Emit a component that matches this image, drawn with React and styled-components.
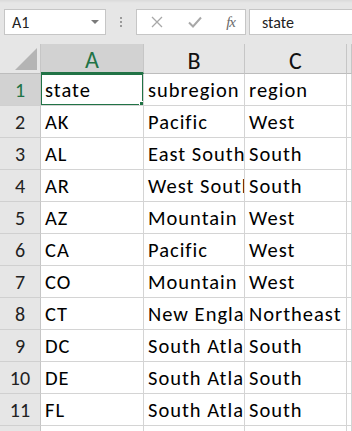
import React from "react"
import styled, { createGlobalStyle } from "styled-components"

const GlobalStyle = createGlobalStyle`
  html, body {
    margin: 0;
    padding: 0;
    background: #ffffff;
    overflow: hidden;
  }
  * {
    box-sizing: border-box;
  }
`

const FONT = `Carlito, Lato, "Open Sans", "Liberation Sans", sans-serif`
const GREEN = "#217346"

const Page = styled.div`
  width: 352px;
  height: 431px;
  overflow: hidden;
  font-family: ${FONT};
  background: #ffffff;
`

// formula bar strip
const Toolbar = styled.div`
  height: 44px;
  display: flex;
  align-items: flex-start;
  padding: 9px 0 0 4px;
  background: linear-gradient(#dadada 0px, #e6e6e6 3px, #e6e6e6 100%);
`
const NameBox = styled.div`
  width: 102px;
  height: 26px;
  background: #ffffff;
  border: 1px solid #c6c6c6;
  display: flex;
  align-items: center;
  justify-content: space-between;
  padding: 0 6px 0 7px;
  font-size: 16px;
  color: #222;
`
const Caret = styled.span`
  width: 0;
  height: 0;
  border-left: 4px solid transparent;
  border-right: 4px solid transparent;
  border-top: 4px solid #7a7a7a;
`
const Grip = styled.div`
  width: 30px;
  height: 26px;
  display: flex;
  flex-direction: column;
  align-items: center;
  justify-content: center;
  gap: 2px;
`
const Dot = styled.span`
  width: 2px;
  height: 2px;
  background: #9a9a9a;
`
const ButtonBox = styled.div`
  width: 110px;
  height: 26px;
  background: #ffffff;
  border: 1px solid #c6c6c6;
  display: flex;
  align-items: center;
  padding: 0 10px 0 14px;
  justify-content: space-between;
`
const Icon = styled.svg`
  display: block;
`
const Fx = styled.span`
  font-family: "Liberation Serif", serif;
  font-style: italic;
  font-size: 15px;
  color: #6a6a6a;
  letter-spacing: -1px;
`
const FormulaInput = styled.div`
  flex: 1;
  height: 26px;
  margin-left: 3px;
  background: #ffffff;
  border: 1px solid #c6c6c6;
  border-right: none;
  display: flex;
  align-items: center;
  padding-left: 12px;
  font-size: 16px;
  color: #222;
`

// sheet grid
const Sheet = styled.div`
  display: grid;
  grid-template-columns: 41px 103px 101px 102px 1fr;
  grid-auto-rows: 32px;
  grid-template-rows: 30px;
`
const Corner = styled.div`
  background: #e6e6e6;
  border-right: 1px solid #c6c6c6;
  border-bottom: 1px solid #bdbdbd;
  display: flex;
  align-items: flex-end;
  justify-content: flex-end;
  padding: 0 3px 3px 0;
`
const ColHead = styled.div`
  background: ${(p) => (p.active ? "#d2d2d2" : "#e6e6e6")};
  color: ${(p) => (p.active ? GREEN : "#111")};
  border-right: 1px solid #c6c6c6;
  border-bottom: ${(p) => (p.active ? `2px solid ${GREEN}` : "1px solid #bdbdbd")};
  display: flex;
  align-items: center;
  justify-content: center;
  font-size: 24px;
  padding-top: 3px;
`
const RowHead = styled.div`
  background: ${(p) => (p.active ? "#d2d2d2" : "#e6e6e6")};
  color: ${(p) => (p.active ? GREEN : "#222")};
  border-right: 1px solid #c6c6c6;
  border-bottom: 1px solid #d0d0d0;
  display: flex;
  align-items: center;
  justify-content: center;
  font-size: 20px;
  padding-top: 1px;
`
const Cell = styled.div`
  position: relative;
  border-right: 1px solid #d4d4d4;
  border-bottom: 1px solid #d4d4d4;
  display: flex;
  align-items: center;
  padding: 1px 0 0 4px;
  font-size: 20.5px;
  letter-spacing: 1px;
  color: #000;
  white-space: nowrap;
  overflow: ${(p) => (p.clip ? "hidden" : "visible")};
  ${(p) =>
    p.selected &&
    `
    &::after {
      content: "";
      position: absolute;
      left: -1px;
      top: -1px;
      right: -1px;
      bottom: -1px;
      border: 2px solid ${GREEN};
      pointer-events: none;
    }
    &::before {
      content: "";
      position: absolute;
      right: -4px;
      bottom: -4px;
      width: 6px;
      height: 6px;
      background: ${GREEN};
      border: 1px solid #ffffff;
      z-index: 2;
    }
  `}
`

const rows = [
  ["state", "subregion", "region"],
  ["AK", "Pacific", "West"],
  ["AL", "East South Central", "South"],
  ["AR", "West South Central", "South"],
  ["AZ", "Mountain", "West"],
  ["CA", "Pacific", "West"],
  ["CO", "Mountain", "West"],
  ["CT", "New England", "Northeast"],
  ["DC", "South Atlantic", "South"],
  ["DE", "South Atlantic", "South"],
  ["FL", "South Atlantic", "South"],
  ["GA", "South Atlantic", "South"],
]

function App() {
  return (
    <Page>
      <GlobalStyle />
      <Toolbar>
        <NameBox>
          A1
          <Caret />
        </NameBox>
        <Grip>
          <Dot />
          <Dot />
          <Dot />
        </Grip>
        <ButtonBox>
          <Icon width="12" height="12" viewBox="0 0 12 12">
            <path d="M1 1 L11 11 M11 1 L1 11" stroke="#a8a8a8" strokeWidth="1.3" fill="none" />
          </Icon>
          <Icon width="14" height="12" viewBox="0 0 14 12">
            <path d="M1 6.5 L5 10.5 L13 1.5" stroke="#a8a8a8" strokeWidth="2" fill="none" />
          </Icon>
          <Fx>fx</Fx>
        </ButtonBox>
        <FormulaInput>state</FormulaInput>
      </Toolbar>
      <Sheet>
        <Corner>
          <Icon width="22" height="22" viewBox="0 0 22 22">
            <polygon points="22,0 22,22 0,22" fill="#b4b4b4" />
          </Icon>
        </Corner>
        <ColHead active>A</ColHead>
        <ColHead>B</ColHead>
        <ColHead>C</ColHead>
        <ColHead />
        {rows.map((r, i) => (
          <React.Fragment key={i}>
            <RowHead active={i === 0}>{i + 1}</RowHead>
            <Cell selected={i === 0} clip>
              {r[0]}
            </Cell>
            <Cell clip>{r[1]}</Cell>
            <Cell>{r[2]}</Cell>
            <Cell />
          </React.Fragment>
        ))}
      </Sheet>
    </Page>
  )
}

export default App
